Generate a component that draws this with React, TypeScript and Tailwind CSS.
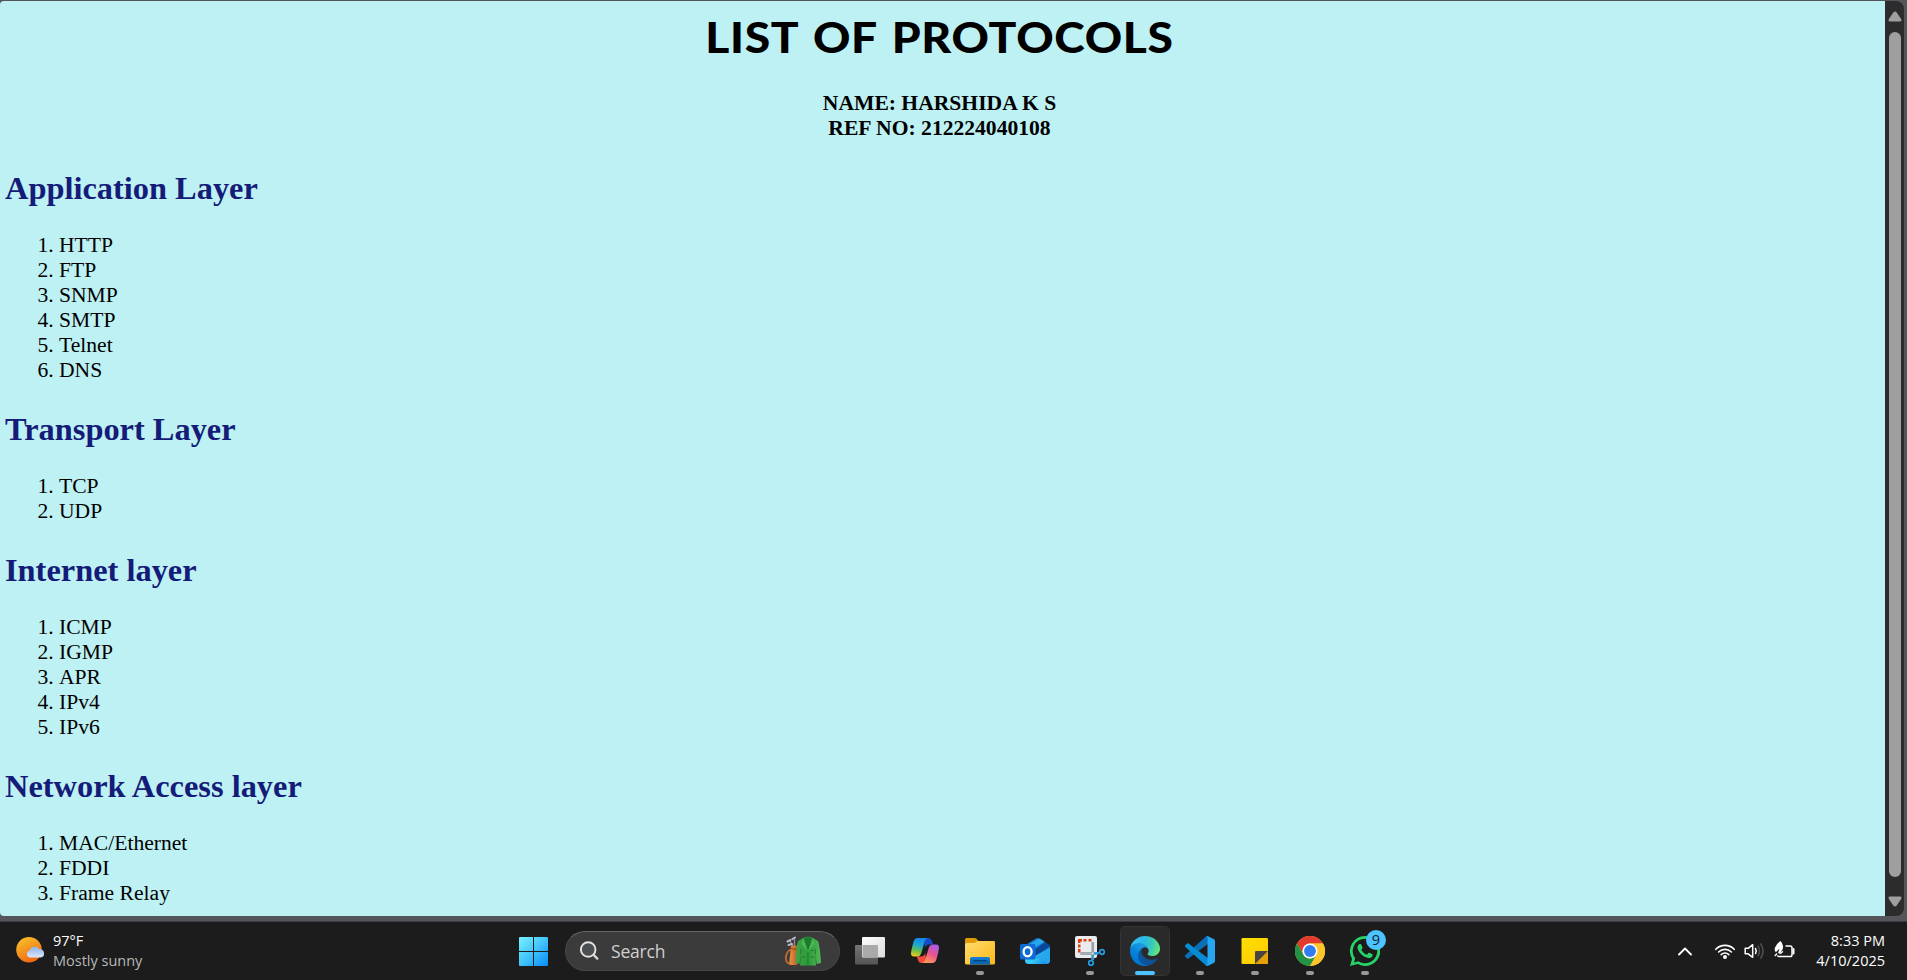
import type { ReactNode } from "react";

const SECTIONS: { title: string; items: string[] }[] = [
  { title: "Application Layer", items: ["HTTP", "FTP", "SNMP", "SMTP", "Telnet", "DNS"] },
  { title: "Transport Layer", items: ["TCP", "UDP"] },
  { title: "Internet layer", items: ["ICMP", "IGMP", "APR", "IPv4", "IPv6"] },
  { title: "Network Access layer", items: ["MAC/Ethernet", "FDDI", "Frame Relay"] },
];

function Page() {
  return (
    <main className="h-[915px] w-[1885px] overflow-hidden rounded-l-[4px] bg-[#bef1f3] pl-[5px] pr-[11px] pt-[11px] font-['Liberation_Serif',serif] text-[21.6px] leading-[25px] text-black">
      <h1 className="h-[51px] origin-center scale-x-110 whitespace-nowrap text-center font-['Lato',sans-serif] text-[42px] font-black leading-[51px] tracking-[0.6px] [word-spacing:3px]">
        LIST OF PROTOCOLS
      </h1>
      <h3 className="mt-[28px] text-center font-bold">
        NAME: HARSHIDA K S
        <br />
        REF NO: 212224040108
      </h3>
      <div className="mt-px">
        {SECTIONS.map((s) => (
          <section key={s.title} className="pt-[27px]">
            <h2 className="mb-[26px] text-[32.4px] font-bold leading-[38px] text-[#151b78]">{s.title}</h2>
            <ol className="list-decimal pl-[54px]">
              {s.items.map((i) => (
                <li key={i}>{i}</li>
              ))}
            </ol>
          </section>
        ))}
      </div>
    </main>
  );
}

function Scrollbar() {
  return (
    <div className="flex h-[915px] w-[19px] flex-col items-center rounded-r-[8px] bg-[#2c2c2c] pt-[10px]">
      <svg width="14" height="11" viewBox="0 0 14 11" fill="#9f9f9f">
        <path d="M7 .5Q8 .5 8.7 1.600L13.300 8.300Q14 10.500 12.300 10.500H1.700Q0 10.500 .7 8.300L5.300 1.600Q6 .5 7 .5Z" />
      </svg>
      <div className="mt-[10px] h-[845px] w-3 rounded-full bg-[#9f9f9f]" />
      <svg className="mt-[19px]" width="14" height="11" viewBox="0 0 14 11" fill="#9f9f9f">
        <path d="M7 10.500Q6 10.500 5.300 9.400L.7 2.700Q0 .5 1.700 .5H12.300Q14 .5 13.300 2.700L8.700 9.400Q8 10.500 7 10.500Z" />
      </svg>
    </div>
  );
}

function Weather() {
  return (
    <div className="flex w-[508px] items-center pl-4">
      <svg width="29" height="28" viewBox="0 0 29 28">
        <defs>
          <linearGradient id="sun" x1="0.2" y1="0" x2="0.7" y2="1">
            <stop offset="0" stopColor="#f8c12c" />
            <stop offset="1" stopColor="#ee6412" />
          </linearGradient>
          <linearGradient id="cloud" x1="0" y1="0" x2="0" y2="1">
            <stop offset="0" stopColor="#8fb0ee" />
            <stop offset="1" stopColor="#dce7fb" />
          </linearGradient>
        </defs>
        <circle cx="13" cy="12.800" r="12.800" fill="url(#sun)" />
        <path
          d="M14 20.500a3.600 3.600 0 0 1-.2-7.100 5.200 5.200 0 0 1 9.600-1 4 4 0 0 1 1.100 8.100Z"
          fill="url(#cloud)"
        />
      </svg>
      <div className="ml-2 text-[14.500px] leading-5 text-white">
        <p>97°F</p>
        <p className="text-[#b8b8b8]">Mostly sunny</p>
      </div>
    </div>
  );
}

function Slot({ children, state = "idle" }: { children: ReactNode; state?: "idle" | "open" | "active" }) {
  return (
    <div
      className={
        state === "active"
          ? "relative flex size-[50px] items-center justify-center rounded-[5px] border border-[#333333] bg-[#2a2a2a]"
          : "relative flex size-[50px] items-center justify-center"
      }
    >
      {children}
      {state === "open" && <span className="absolute bottom-[1px] left-[21px] h-1 w-2 rounded-full bg-[#9b9799]" />}
      {state === "active" && <span className="absolute bottom-0 left-[14px] h-1 w-5 rounded-full bg-[#4cc2ff]" />}
    </div>
  );
}

function StartIcon() {
  return (
    <svg width="30" height="30" viewBox="0 0 30 30">
      <defs>
        <linearGradient id="win" gradientUnits="userSpaceOnUse" x1="0" y1="0" x2="30" y2="30">
          <stop offset="0" stopColor="#7af4ff" />
          <stop offset="0.500" stopColor="#45c6fb" />
          <stop offset="1" stopColor="#078bf8" />
        </linearGradient>
      </defs>
      <path
        fill="url(#win)"
        d="M2 1H15V15H1V2Q1 1 2 1ZM16 1H29Q30 1 30 2V15H16ZM1 16H15V30H2Q1 30 1 29ZM16 16H30V29Q30 30 29 30H16Z"
      />
    </svg>
  );
}

function SearchBox() {
  return (
    <div className="ml-[7px] mr-[5px] flex h-10 w-[275px] items-center rounded-full border border-[#474747] border-t-[#666666] bg-[#3b3b3b] pl-[14px] pr-[17px]">
      <svg width="20" height="20" viewBox="0 0 20 20" fill="none" strokeLinecap="round">
        <circle cx="8.200" cy="8.500" r="7.300" stroke="#e3e3e3" strokeWidth="1.900" fill="#4c4f52" />
        <path d="M13.600 13.900L17.300 17.600" stroke="#d6d6d6" strokeWidth="2.300" />
      </svg>
      <span className="ml-[11px] text-[17.500px] leading-6 tracking-[-0.2px] text-[#cfcfcf]">Search</span>
      <svg className="ml-auto" width="38" height="30" viewBox="0 0 38 30">
        <defs>
          <linearGradient id="bag" x1="0" y1="0" x2="1" y2="0">
            <stop offset="0" stopColor="#e99048" />
            <stop offset="1" stopColor="#b95a20" />
          </linearGradient>
          <linearGradient id="coat" x1="0" y1="0" x2="1" y2="0">
            <stop offset="0" stopColor="#3fa447" />
            <stop offset="0.500" stopColor="#2c9a39" />
            <stop offset="1" stopColor="#52b957" />
          </linearGradient>
        </defs>
        <path d="M6 4.500L9.500 12M10.500 2.500V12" stroke="#8d8d9c" strokeWidth="1.300" fill="none" strokeLinecap="round" />
        <path d="M3.500 5.500L6.500 4M8.500 3L11 1.500M4.500 9L8 8" stroke="#b9b9c8" strokeWidth="2" fill="none" strokeLinecap="round" />
        <path d="M8.500 13Q1 15 2 24Q3 28 8 28" stroke="#c36a2c" strokeWidth="1.800" fill="none" />
        <path d="M7 10Q10 8.500 14 10L13 29H7Q5 29 5.500 24Z" fill="url(#bag)" />
        <path d="M6.500 12.500L13 13.500" stroke="#8b3d12" strokeWidth="1" />
        <path
          d="M19 2Q24 -.5 29 2L34 5Q36 10 37 27L32.500 28L31.500 17L32 29.500H16L17 17L15.500 28L11.500 27Q12 11 14 5Z"
          fill="url(#coat)"
        />
        <path d="M20 2Q24 .3 28 2L27.500 6L24 14L20.500 6Z" fill="#1c7a2d" />
        <path d="M19 2L17.500 8L23.800 16L20.500 5ZM29 2L30.500 8L24 16L27.500 5Z" fill="#4cb555" />
        <path d="M23.900 16V29M17.500 21h3.500M27 21h3.500M16.700 13V18M31.300 13V18" stroke="#1b7429" strokeWidth="0.800" fill="none" />
        <path d="M27 14.500h2.500" stroke="#1b7429" strokeWidth="1" />
      </svg>
    </div>
  );
}

function TaskViewIcon() {
  return (
    <svg width="30" height="30" viewBox="0 0 30 30">
      <defs>
        <linearGradient id="tv" x1="0" y1="0" x2="1" y2="1">
          <stop offset="0" stopColor="#fdfdfd" />
          <stop offset="1" stopColor="#dcdcdc" />
        </linearGradient>
        <linearGradient id="tvb" x1="0" y1="0" x2="0" y2="1">
          <stop offset="0" stopColor="#747474" />
          <stop offset="1" stopColor="#555555" />
        </linearGradient>
      </defs>
      <rect x="0" y="9" width="23" height="19.500" rx="1" fill="url(#tvb)" />
      <rect x="7" y="1" width="23" height="20.500" rx="1" fill="url(#tv)" />
      <path d="M7.500 9H22Q23 9 23 10V21H7.500Z" fill="#aaaaaa" />
    </svg>
  );
}

function CopilotIcon() {
  return (
    <svg width="30" height="30" viewBox="0 0 30 30">
      <defs>
        <linearGradient id="cpa" x1="0.400" y1="0" x2="0.200" y2="1">
          <stop offset="0" stopColor="#1589e8" />
          <stop offset="0.350" stopColor="#19a6d5" />
          <stop offset="0.650" stopColor="#62bd52" />
          <stop offset="1" stopColor="#f4cb17" />
        </linearGradient>
        <linearGradient id="cpb" x1="0.800" y1="0" x2="0.300" y2="1">
          <stop offset="0" stopColor="#a55cf0" />
          <stop offset="0.500" stopColor="#e9558f" />
          <stop offset="1" stopColor="#ff9a52" />
        </linearGradient>
      </defs>
      <path d="M14 2H18.500Q21 2 21.800 4.500L23.200 8.500H19Q16 8.500 15 12Z" fill="#1749c9" />
      <path d="M16.500 27H11.500Q9 27 8.200 24.500L6.800 20.500H11Q14 20.500 15.200 17Z" fill="#f24b3d" />
      <path d="M7.800 2H18Q15.800 2 14.900 5L11.300 17Q10.200 20.500 7 20.500H4Q.2 20.500 1.200 15.500Q2.300 9.500 3.800 5Q4.800 2 7.800 2Z" fill="url(#cpa)" />
      <path d="M22.200 27H12Q14.200 27 15.100 24L18.700 12Q19.800 8.500 23 8.500H26Q29.800 8.500 28.800 13.500Q27.700 19.500 26.200 24Q25.200 27 22.200 27Z" fill="url(#cpb)" />
    </svg>
  );
}

function FolderIcon() {
  return (
    <svg width="30" height="30" viewBox="0 0 30 30">
      <defs>
        <linearGradient id="fold" x1="0" y1="0" x2="1" y2="1">
          <stop offset="0" stopColor="#ffdc72" />
          <stop offset="1" stopColor="#fcb814" />
        </linearGradient>
        <linearGradient id="foldb" x1="0" y1="0" x2="0" y2="1">
          <stop offset="0" stopColor="#1280d8" />
          <stop offset="1" stopColor="#0861ae" />
        </linearGradient>
      </defs>
      <path d="M0 3.500Q0 2 1.500 2H9.500Q10.800 2 11.700 3L13.500 5H28.500Q30 5 30 6.500V12H0Z" fill="#df9a04" />
      <path d="M0 8.500Q0 7 1.500 7H9.500L12.500 5H28.800Q30 5 30 6.500V27Q30 28.500 28.500 28.500H1.500Q0 28.500 0 27Z" fill="url(#fold)" />
      <path d="M5 28.500V23Q5 21 7 21H23Q25 21 25 23V28.500Z" fill="url(#foldb)" />
      <rect x="8" y="24" width="14" height="1.400" rx="0.700" fill="#04447f" />
    </svg>
  );
}

function OutlookIcon() {
  return (
    <svg width="30" height="30" viewBox="0 0 30 30">
      <defs>
        <linearGradient id="ola" x1="0" y1="0" x2="1" y2="1">
          <stop offset="0" stopColor="#1277d2" />
          <stop offset="1" stopColor="#30c4f5" />
        </linearGradient>
        <linearGradient id="olb" x1="0" y1="0" x2="1" y2="0.600">
          <stop offset="0" stopColor="#45d8fb" />
          <stop offset="0.600" stopColor="#32c7f7" />
          <stop offset="1" stopColor="#1d91e7" />
        </linearGradient>
      </defs>
      <path d="M5 12Q5 9.500 7 8.200L15.500 2.700Q17.500 1.500 19.500 2.700L28 8.200Q30 9.500 30 12V24Q30 28 26 28H9Q5 28 5 24Z" fill="#137bd5" />
      <path d="M9 8.500L19.500 2.500L24.500 5.500L11 14H6Z" fill="#28a8ea" />
      <path d="M14 14L25 6.300L28 8.200Q29.300 9 29.800 10.500L14 21Z" fill="#0a479b" />
      <path d="M5 22L15 20L30 12V24Q30 28 26 28H9Q5 28 5 24Z" fill="url(#olb)" />
      <path d="M14 21L30 11.500V24Q30 26 28 27.500Z" fill="url(#ola)" opacity="0.550" />
      <rect x="0" y="8" width="15.500" height="15.500" rx="1.500" fill="#0d6cd3" />
      <ellipse cx="7.600" cy="15.700" rx="4" ry="4.600" fill="none" stroke="#ffffff" strokeWidth="2.300" />
    </svg>
  );
}

function SnipIcon() {
  return (
    <svg width="30" height="30" viewBox="0 0 30 30">
      <rect x="0" y="0" width="22" height="22" rx="2" fill="#e9ebee" />
      <path d="M3 3h4v2.500H5.500V7H3ZM8.500 3h3v2.500h-3ZM13.500 3h3v2.500h-3ZM3 8.500h2.500v3H3ZM3 13h2.500v3.500H3Z" fill="#dc3f0d" />
      <path d="M5.500 17.500H23M17.800 6V24" stroke="#8b929a" strokeWidth="2.600" />
      <path d="M5.500 17.500H18L18 6" stroke="#a8aeb5" strokeWidth="1.200" fill="none" />
      <path d="M18 17.500L24 17M17.500 18V24" stroke="#1e9be0" strokeWidth="1.800" />
      <circle cx="27" cy="16" r="2.300" fill="none" stroke="#239fe3" strokeWidth="1.700" />
      <circle cx="16" cy="27" r="2.300" fill="none" stroke="#239fe3" strokeWidth="1.700" />
      <circle cx="17.700" cy="17.500" r="1.200" fill="#d5d9dd" />
    </svg>
  );
}

function EdgeIcon() {
  return (
    <svg width="30" height="30" viewBox="0 0 256 256">
      <defs>
        <linearGradient id="e1" gradientUnits="userSpaceOnUse" x1="63" y1="176" x2="241" y2="176">
          <stop offset="0" stopColor="#0c59a4" />
          <stop offset="1" stopColor="#114a8b" />
        </linearGradient>
        <linearGradient id="e2" gradientUnits="userSpaceOnUse" x1="157" y1="100" x2="46" y2="220">
          <stop offset="0" stopColor="#1b9de2" />
          <stop offset="0.300" stopColor="#1595df" />
          <stop offset="0.700" stopColor="#0680d7" />
          <stop offset="1" stopColor="#0078d4" />
        </linearGradient>
        <radialGradient id="e3" gradientUnits="userSpaceOnUse" cx="30" cy="45" r="240">
          <stop offset="0" stopColor="#35c1f1" />
          <stop offset="0.350" stopColor="#2ab8eb" />
          <stop offset="0.650" stopColor="#36c7bd" />
          <stop offset="1" stopColor="#66eb6e" />
        </radialGradient>
      </defs>
      <path
        fill="url(#e1)"
        d="M231 190.500c-3.400 1.800-6.900 3.400-10.500 4.700a101.700 101.700 0 0 1-35.900 6.500c-47.300 0-88.500-32.500-88.500-74.300a31.500 31.500 0 0 1 16.400-27.300c-42.800 1.800-53.800 46.400-53.800 72.500 0 74 68.100 81.400 82.800 81.400 7.900 0 19.800-2.300 27-4.600l1.300-.4a128.300 128.300 0 0 0 66.600-52.800 4 4 0 0 0-5.400-5.700z"
      />
      <path
        fill="url(#e2)"
        d="M105.700 241.400a79.200 79.200 0 0 1-22.700-21.300 80.700 80.700 0 0 1 29.500-120c3.200-1.500 8.500-4.100 15.600-4a32.400 32.400 0 0 1 25.700 13 31.900 31.900 0 0 1 6.300 18.700c0-.2 24.500-79.600-80-79.600-43.900 0-80 41.700-80 78.200a130.200 130.200 0 0 0 12.100 56 128 128 0 0 0 156.400 67.100 75.500 75.500 0 0 1-62.800-8z"
      />
      <path
        fill="url(#e3)"
        d="M152.300 148.900c-.9 1-3.300 2.500-3.300 5.700 0 2.600 1.700 5.100 4.700 7.300 14.400 10 41.500 8.600 41.600 8.600a59.600 59.600 0 0 0 30.300-8.300 61.400 61.400 0 0 0 30.400-52.900c.3-22.400-8-37.300-11.300-43.900C223.500 23.900 177.700 0 128 0A128 128 0 0 0 0 126.200c.5-36.500 36.800-66 80-66 3.500 0 23.500.3 42 10a72.600 72.600 0 0 1 30.900 29.300c6.100 10.600 7.200 24.100 7.200 29.500s-2.700 13.300-7.800 19.900z"
      />
    </svg>
  );
}

function VsCodeIcon() {
  return (
    <svg width="30" height="30" viewBox="0 0 100 100">
      <path
        fill="#0b6fb8"
        d="M96.500 10.800L75.900.9a6.200 6.200 0 0 0-7.100 1.200L1.300 63.600a4.200 4.200 0 0 0 0 6.200l5.500 5a4.200 4.200 0 0 0 5.300.2L93.400 13.400A4.100 4.100 0 0 1 100 16.700v-.2a6.300 6.300 0 0 0-3.500-5.700z"
      />
      <path
        fill="#078bd3"
        d="M96.500 89.200L75.900 99.100a6.200 6.200 0 0 1-7.100-1.200L1.300 36.400a4.200 4.200 0 0 1 0-6.200l5.500-5a4.200 4.200 0 0 1 5.300-.2l81.300 61.600a4.100 4.100 0 0 0 6.600-3.300v.2a6.300 6.300 0 0 1-3.500 5.700z"
      />
      <path
        fill="#27a6f2"
        d="M75.900 99.100a6.200 6.200 0 0 1-7.100-1.200c2.300 2.300 6.200.7 6.200-2.600V4.700c0-3.300-3.900-4.900-6.200-2.600A6.200 6.200 0 0 1 75.900.9l20.600 9.900a6.300 6.300 0 0 1 3.500 5.600v67.200a6.300 6.300 0 0 1-3.500 5.600z"
      />
    </svg>
  );
}

function StickyIcon() {
  return (
    <svg width="30" height="30" viewBox="0 0 30 30">
      <defs>
        <linearGradient id="st" x1="0" y1="0" x2="1" y2="1">
          <stop offset="0" stopColor="#ffe000" />
          <stop offset="1" stopColor="#fdc900" />
        </linearGradient>
      </defs>
      <rect x="1.500" y="2" width="26.500" height="26" rx="1.200" fill="url(#st)" />
      <path d="M15 28L28 15V27Q28 28 27 28Z" fill="#e5a00c" />
      <path d="M15 28V16Q15 15 16 15H28Z" fill="#474443" />
    </svg>
  );
}

function ChromeIcon() {
  return (
    <svg width="30" height="30" viewBox="0 0 48 48">
      <circle cx="24" cy="24" r="24" fill="#fcc934" />
      <path d="M24 12H44.800A24 24 0 0 0 3.200 12L13.600 30A12 12 0 0 1 24 12Z" fill="#e33b2e" />
      <path d="M34.400 30L24 48A24 24 0 0 1 3.200 12L13.600 30A12 12 0 0 0 34.400 30Z" fill="#229345" />
      <path d="M34.400 30A12 12 0 0 0 24 12H44.800A24 24 0 0 1 24 48Z" fill="#fcc52c" />
      <circle cx="24" cy="24" r="12" fill="#ffffff" />
      <circle cx="24" cy="24" r="9.500" fill="#2f7df0" />
    </svg>
  );
}

function WhatsAppIcon() {
  return (
    <svg width="30" height="30" viewBox="0 0 24 24" fill="#25d366">
      <path d="M17.472 14.382c-.297-.149-1.758-.867-2.030-.967-.273-.099-.471-.148-.670.150-.197.297-.767.966-.940 1.164-.173.199-.347.223-.644.075-.297-.150-1.255-.463-2.390-1.475-.883-.788-1.480-1.761-1.653-2.059-.173-.297-.018-.458.130-.606.134-.133.298-.347.446-.520.149-.174.198-.298.298-.497.099-.198.050-.371-.025-.520-.075-.149-.669-1.612-.916-2.207-.242-.579-.487-.500-.669-.510-.173-.008-.371-.010-.570-.010-.198 0-.520.074-.792.372-.272.297-1.040 1.016-1.040 2.479 0 1.462 1.065 2.875 1.213 3.074.149.198 2.096 3.200 5.077 4.487.709.306 1.262.489 1.694.625.712.227 1.360.195 1.871.118.571-.085 1.758-.719 2.006-1.413.248-.694.248-1.289.173-1.413-.074-.124-.272-.198-.570-.347z" />
      <path
        fillRule="evenodd"
        d="M12 0A12 12 0 0 0 1.700 18.100L0 24L6.200 22.400A12 12 0 1 0 12 0ZM12 2.200A9.800 9.800 0 1 1 6.600 20.200L3.200 21.100L4.100 17.800A9.800 9.800 0 0 1 12 2.200Z"
      />
    </svg>
  );
}

function Tray() {
  return (
    <div className="ml-auto flex items-center pr-[22px] text-white">
      <svg width="14" height="9" viewBox="0 0 14 9" fill="none" stroke="currentColor" strokeWidth="1.800" strokeLinecap="round" strokeLinejoin="round">
        <path d="M1 7.500L7 1.500L13 7.500" />
      </svg>
      <svg className="ml-[22px]" width="22" height="18" viewBox="0 0 22 18" fill="none" stroke="currentColor" strokeWidth="1.600" strokeLinecap="round">
        <path d="M1.800 7.300A12.700 12.700 0 0 1 20.200 7.300M4.600 10A9 9 0 0 1 17.400 10M7.200 12.600A5.400 5.400 0 0 1 14.800 12.600" />
        <circle cx="11" cy="15" r="1.200" fill="currentColor" />
      </svg>
      <svg className="ml-2" width="22" height="18" viewBox="0 0 22 18" fill="none" stroke="currentColor" strokeWidth="1.500" strokeLinecap="round" strokeLinejoin="round">
        <path d="M1.200 6.300H4.200L8.700 2.700V15.300L4.200 11.800H1.200Z" />
        <path d="M11.500 6.500Q13 9 11.500 11.500" />
        <path d="M14 4.200Q17 9 14 13.800M16.800 2Q21.300 9 16.800 16" stroke="#505050" />
      </svg>
      <svg className="ml-2" width="22" height="20" viewBox="0 0 22 20" fill="none" stroke="currentColor" strokeWidth="1.500">
        <path d="M11.500 5H16.200Q18 5 18 6.800V13.700Q18 15.500 16.200 15.500H5Q3.800 15.500 3.300 14.500" />
        <path d="M19.500 8V12.500" strokeWidth="2" strokeLinecap="round" />
        <path d="M6.500 0Q2 3.200 .8 7Q.2 9.500 1.800 11.300L5.500 7.500L4 12.300H6Q9.500 9.500 9 5Q8.500 2 6.500 0Z" fill="currentColor" stroke="none" />
        <path d="M.8 15L3 12.500M5.500 12.500Q8 12 8.800 10.300" strokeWidth="1.300" />
      </svg>
      <div className="ml-[18px] w-[71px] whitespace-nowrap text-right text-[14.500px] leading-5">
        <p>8:33 PM</p>
        <p>4/10/2025</p>
      </div>
    </div>
  );
}

function Taskbar() {
  return (
    <footer className="flex h-[59px] items-center border-t border-[#3c3d40] bg-[#1c1c1c] font-['Open_Sans','Noto_Sans',sans-serif]">
      <Weather />
      <Slot><StartIcon /></Slot>
      <SearchBox />
      <div className="flex gap-[5px]">
        <Slot><TaskViewIcon /></Slot>
        <Slot><CopilotIcon /></Slot>
        <Slot state="open"><FolderIcon /></Slot>
        <Slot><OutlookIcon /></Slot>
        <Slot state="open"><SnipIcon /></Slot>
        <Slot state="active"><EdgeIcon /></Slot>
        <Slot state="open"><VsCodeIcon /></Slot>
        <Slot state="open"><StickyIcon /></Slot>
        <Slot state="open"><ChromeIcon /></Slot>
        <Slot state="open">
          <WhatsAppIcon />
          <span className="absolute left-[26px] top-[4px] flex size-5 items-center justify-center rounded-full bg-[#4cc2ff] text-[14.500px] leading-5 text-[#10202c]">
            9
          </span>
        </Slot>
      </div>
      <Tray />
    </footer>
  );
}

export default function App() {
  return (
    <div className="flex h-[980px] w-[1907px] flex-col overflow-hidden bg-[#55565c]">
      <div className="flex h-[921px] pt-px">
        <Page />
        <Scrollbar />
      </div>
      <Taskbar />
    </div>
  );
}
